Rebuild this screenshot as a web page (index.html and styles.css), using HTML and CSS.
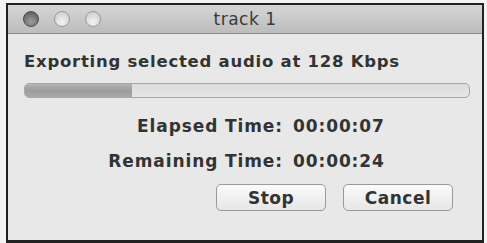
FILE: index.html
```html
<!DOCTYPE html>
<html>
<head>
<meta charset="utf-8">
<link rel="stylesheet" href="styles.css">
</head>
<body>
<div class="window">
  <div class="titlebar">
    <div class="lights">
      <span class="light close"></span>
      <span class="light"></span>
      <span class="light"></span>
    </div>
    <div class="title">track 1</div>
  </div>
  <div class="content">
    <div class="message">Exporting selected audio at 128 Kbps</div>
    <div class="progress"><div class="fill" style="width:24%"></div></div>
    <div class="times">
      <div class="label">Elapsed Time:</div><div class="value">00:00:07</div>
      <div class="label">Remaining Time:</div><div class="value">00:00:24</div>
    </div>
    <div class="buttons">
      <button class="btn">Stop</button>
      <button class="btn">Cancel</button>
    </div>
  </div>
</div>
</body>
</html>
```
FILE: styles.css
```css
html, body { margin: 0; padding: 0; }
body {
  width: 487px;
  height: 243px;
  background: #f4f4f4;
  font-family: "DejaVu Sans", "Liberation Sans", sans-serif;
  color: #2a2a2a;
  overflow: hidden;
}
.window {
  margin: 3px 0 0 6px;
  width: 474px;
  height: 235px;
  border: 2px solid #222;
  border-bottom-width: 4px;
  background: #e8e8e8;
  display: flex;
  flex-direction: column;
}
.titlebar {
  height: 28px;
  background: linear-gradient(#d6d6d6, #bcbcbc);
  border-bottom: 1px solid #8a8a8a;
  position: relative;
  display: flex;
  align-items: center;
}
.lights {
  display: flex;
  gap: 15px;
  padding-left: 15px;
}
.light {
  width: 14px;
  height: 14px;
  border-radius: 50%;
  border: 1px solid #9a9a9a;
  background: radial-gradient(circle at 50% 70%, #f4f4f4, #c6c6c6);
}
.light.close {
  border-color: #4a4a4a;
  background: radial-gradient(circle at 50% 70%, #9c9c9c, #555);
}
.title {
  position: absolute;
  left: 0;
  right: 0;
  text-align: center;
  font-size: 17px;
  letter-spacing: 0.5px;
  color: #3a3a3a;
}
.content {
  flex: 1;
  padding: 18px 12px 0 16px;
  display: flex;
  flex-direction: column;
}
.message {
  font-size: 16.5px;
  line-height: 19px;
  font-weight: 600;
  letter-spacing: 0.75px;
  color: #333;
}
.progress {
  margin-top: 12px;
  height: 13px;
  border: 1px solid #a8a8a8;
  border-radius: 5px;
  background: linear-gradient(#dcdcdc, #e6e6e6);
  overflow: hidden;
}
.fill {
  height: 100%;
  background: linear-gradient(#b4b4b4, #9c9c9c 50%, #a8a8a8);
}
.times {
  margin-top: 18px;
  display: grid;
  grid-template-columns: 259px auto;
  column-gap: 10px;
  row-gap: 15px;
  font-size: 17px;
  line-height: 20px;
  font-weight: 600;
  letter-spacing: 0.9px;
  color: #333;
}
.label { text-align: right; }
.buttons {
  margin-top: 13px;
  display: flex;
  gap: 17px;
  padding-left: 192px;
}
.btn {
  width: 110px;
  height: 27px;
  border: 1px solid #9a9a9a;
  border-radius: 5px;
  background: linear-gradient(#fbfbfb, #e6e6e6);
  font-family: "DejaVu Sans", "Liberation Sans", sans-serif;
  font-size: 17px;
  font-weight: 600;
  letter-spacing: 0.5px;
  color: #333;
  padding: 0;
}
```
